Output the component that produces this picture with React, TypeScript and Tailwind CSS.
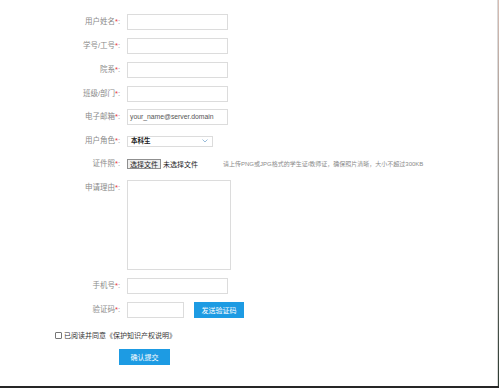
import React from "react"

const font = { fontFamily: '"Liberation Sans", "Noto Sans CJK SC", sans-serif' }

function Label({ text }: { text: string }) {
  return (
    <div className="w-[122px] shrink-0 pr-[2px] text-right text-[7.5px] leading-none text-[#8a8a8a]">
      {text}
      <span className="text-[#e4393c]">*</span>:
    </div>
  )
}

function TextRow({ label, mt, placeholder }: { label: string; mt: string; placeholder?: string }) {
  return (
    <div className={`flex h-[16px] items-center ${mt}`}>
      <Label text={label} />
      <div className="ml-[5px] flex h-[16px] w-[101px] items-center border border-[#dcdcdc] bg-white px-[2px] text-[6.8px] text-[#555]">
        {placeholder}
      </div>
    </div>
  )
}

export default function App() {
  return (
    <div className="flex h-[388px] w-[499px] border-b-2 border-[#262626] bg-white" style={font}>
      <div className="flex-1 bg-white pt-[14px]">
        <TextRow label="用户姓名" mt="mt-0" />
        <TextRow label="学号/工号" mt="mt-[8px]" />
        <TextRow label="院系" mt="mt-[8px]" />
        <TextRow label="班级/部门" mt="mt-[8px]" />
        <TextRow label="电子邮箱" mt="mt-[7px]" placeholder="your_name@server.domain" />

        {/* role select */}
        <div className="mt-[11px] flex h-[10px] items-center">
          <Label text="用户角色" />
          <div className="ml-[5px] flex h-[11px] w-[86px] items-center justify-between border border-[#dcdcdc] bg-white pl-[3px] pr-[4px]">
            <span className="text-[6.5px] font-bold leading-none text-[#222]">本科生</span>
            <svg width="6" height="4" viewBox="0 0 6 4">
              <path d="M0.5 0.5 L3 3 L5.5 0.5" fill="none" stroke="#8fb6d6" strokeWidth="0.9" />
            </svg>
          </div>
        </div>

        {/* file upload */}
        <div className="mt-[13px] flex h-[10px] items-center">
          <Label text="证件照" />
          <div className="ml-[5px] flex h-[10px] items-center border border-[#8f8f8f] bg-[#efefef] px-[2px] text-[7px] leading-none text-[#222]">
            选择文件
          </div>
          <span className="ml-[2px] text-[7px] leading-none text-[#222]">未选择文件</span>
          <span className="ml-[25px] whitespace-nowrap text-[6px] leading-none text-[#8a8a8a]">
            请上传PNG或JPG格式的学生证/教师证，确保照片清晰，大小不超过300KB
          </span>
        </div>

        {/* reason */}
        <div className="mt-[11px] flex h-[90px] items-start">
          <div className="pt-[4px]">
            <Label text="申请理由" />
          </div>
          <div className="ml-[5px] h-[90px] w-[104px] border border-[#dcdcdc] bg-white" />
        </div>

        <TextRow label="手机号" mt="mt-[8px]" />

        {/* verification code */}
        <div className="mt-[8px] flex h-[16px] items-center">
          <Label text="验证码" />
          <div className="ml-[5px] h-[16px] w-[57px] border border-[#dcdcdc] bg-white" />
          <button className="ml-[10px] flex h-[16px] w-[50px] items-center justify-center bg-[#1d9be3] text-[7px] leading-none text-white">
            发送验证码
          </button>
        </div>

        {/* agreement */}
        <div className="mt-[13px] flex h-[8px] items-center pl-[55px]">
          <div className="h-[7px] w-[7px] rounded-[1px] border border-[#767676] bg-white" />
          <span className="ml-[2px] text-[7px] leading-none text-[#333]">已阅读并同意《保护知识产权说明》</span>
        </div>

        <div className="mt-[10px] pl-[119px]">
          <button className="flex h-[16px] w-[51px] items-center justify-center bg-[#1d9be3] text-[7px] leading-none text-white">
            确认提交
          </button>
        </div>
      </div>
      <div className="w-[2px] border-l border-[#d9d9d9] bg-gradient-to-b from-[#d9beb4] via-[#8a8a86] to-[#2c3a30]" />
    </div>
  )
}
